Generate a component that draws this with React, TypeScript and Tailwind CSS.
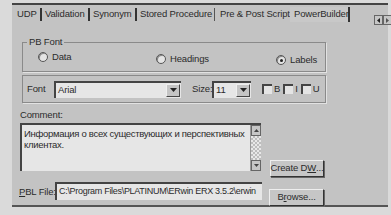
import React from "react";

const Radio = ({ checked }: { checked?: boolean }) => (
  <span className="relative inline-block shrink-0 w-[10px] h-[10px] rounded-full bg-[#e4e4e4] border border-[#555] shadow-[inset_1px_1px_0_#888]">
    {checked && <span className="absolute left-[2.5px] top-[2.5px] w-[3px] h-[3px] rounded-full bg-[#222]" />}
  </span>
);

const Check = () => (
  <span className="inline-block shrink-0 w-[10px] h-[10px] bg-[#e4e4e4] border-l-2 border-t-2 border-[#444]" />
);

const DropBtn = () => (
  <span className="flex shrink-0 items-center justify-center w-[14px] h-[13px] bg-[#c4c4c4] border border-t-[#eee] border-l-[#eee] border-b-[#444] border-r-[#444]">
    <svg width="7" height="4" viewBox="0 0 7 4"><path d="M0 0h7L3.5 4z" fill="#222" /></svg>
  </span>
);

export default function App() {
  return (
    <div className="w-[391px] h-[215px] bg-[#dadada] overflow-hidden text-[9.5px] tracking-[-0.15px] leading-none whitespace-nowrap text-[#2b2b2b] font-['Liberation_Sans',Arial,sans-serif]">
      <div className="pt-[3px] pl-[12px]">
        <div className="w-[376px] h-[204px] bg-[#c3c3c3] border-t-2 border-[#444] border-b-2 border-b-[#555] flex flex-col">
          {/* tabs */}
          <div className="h-[18px] flex items-center pl-[4px]">
            <div className="w-[26px] pl-[1px] border-r-2 border-[#333] h-[13px] flex items-center">UDP</div>
            <div className="w-[48px] pl-[3px] border-r-2 border-[#333] h-[13px] flex items-center">Validation</div>
            <div className="w-[47px] pl-[3px] border-r-2 border-[#333] h-[13px] flex items-center">Synonym</div>
            <div className="w-[78px] pl-[3px] border-r border-[#555] h-[13px] flex items-center">Stored Procedure</div>
            <div className="w-[75px] pl-[5px] h-[13px] flex items-center">Pre &amp; Post Script</div>
            <div className="w-[60px] pl-[4px] border-r-2 border-[#333] h-[15px] flex items-center bg-[#c8c8c8]">PowerBuilder</div>
            <div className="ml-auto mr-[-4px] mt-[12px] flex">
              <span className="w-[9px] h-[10px] bg-[#c6c6c6] border border-[#666] flex items-center justify-center">
                <svg width="3" height="5" viewBox="0 0 3 5"><path d="M3 0v5L0 2.5z" fill="#222" /></svg>
              </span>
              <span className="w-[9px] h-[10px] bg-[#c6c6c6] border border-[#666] flex items-center justify-center">
                <svg width="3" height="5" viewBox="0 0 3 5"><path d="M0 0v5L3 2.5z" fill="#555" /></svg>
              </span>
            </div>
          </div>

          {/* body */}
          <div className="pl-[10px] pt-[14px]">
            <fieldset className="w-[304px] h-[35px] border border-[#8a8a8a] shadow-[1px_1px_0_#e2e2e2] m-0 p-0">
              <legend className="ml-[4px] px-[2px] leading-[10px]">PB Font</legend>
              <div className="flex items-center h-[20px] pl-[15px]">
                <div className="flex items-center gap-[4px] w-[118px]"><Radio /><span>Data</span></div>
                <div className="flex items-center gap-[4px] w-[120px] mt-[3px]"><Radio /><span>Headings</span></div>
                <div className="flex items-center gap-[4px] mt-[6px]"><Radio checked /><span>Labels</span></div>
              </div>
            </fieldset>

            <div className="mt-[3px] w-[304px] h-[28px] border border-[#8a8a8a] shadow-[1px_1px_0_#e2e2e2] flex items-center pl-[4px]">
              <span className="w-[27px]">Font</span>
              <div className="w-[127px] h-[17px] bg-[#e6e6e6] border-l-2 border-t-2 border-[#444] flex items-center justify-between pl-[2px] pr-[1px]">
                <span>Arial</span>
                <DropBtn />
              </div>
              <span className="ml-[11px] w-[20px]">Size:</span>
              <div className="w-[39px] h-[17px] bg-[#e6e6e6] border-l-2 border-t-2 border-[#444] flex items-center justify-between pl-[2px] pr-[1px]">
                <span>11</span>
                <DropBtn />
              </div>
              <div className="ml-[11px] flex items-center gap-[2px]"><Check /><span>B</span></div>
              <div className="ml-[3px] flex items-center gap-[2px]"><Check /><span>I</span></div>
              <div className="ml-[3px] flex items-center gap-[2px]"><Check /><span>U</span></div>
            </div>

            <div className="mt-[7px] ml-[-2px]">Comment:</div>
            <div className="flex items-end mt-[3px] ml-[-2px]">
              <div className="w-[241px] h-[48px] bg-[#e6e6e6] border-l-2 border-t-2 border-[#444] flex">
                <div className="flex-1 min-w-0 pl-[2px] pt-[3px] leading-[11px] whitespace-normal tracking-[-0.3px]">
                  Информация о всех существующих и перспективных клиентах.
                </div>
                <div className="w-[11px] shrink-0 flex flex-col border-l border-[#999]">
                  <span className="h-[11px] bg-[#c6c6c6] border border-[#666] flex items-center justify-center">
                    <svg width="5" height="3" viewBox="0 0 5 3"><path d="M0 3h5L2.5 0z" fill="#444" /></svg>
                  </span>
                  <span className="flex-1 bg-[repeating-conic-gradient(#bdbdbd_0_25%,#e8e8e8_0_50%)] bg-[length:4px_4px]" />
                  <span className="h-[11px] bg-[#c6c6c6] border border-[#666] flex items-center justify-center">
                    <svg width="5" height="3" viewBox="0 0 5 3"><path d="M0 0h5L2.5 3z" fill="#444" /></svg>
                  </span>
                </div>
              </div>
              <div className="ml-[9px] mb-[-6px] w-[54px] h-[17px] bg-[#c6c6c6] border border-t-[#eee] border-l-[#eee] border-b-[#333] border-r-[#333] shadow-[1px_1px_0_#666] flex items-center justify-center">
                Create D<span className="underline">W</span>...
              </div>
            </div>

            <div className="flex items-start mt-[11px] ml-[-3px]">
              <span className="w-[36px] mt-[5px]"><span className="underline">P</span>BL File:</span>
              <div className="w-[207px] h-[18px] bg-[#e6e6e6] border-l-2 border-t-2 border-[#444] flex items-center pl-[2px] overflow-hidden text-[9px] tracking-[-0.3px]">
                C:\Program Files\PLATINUM\ERwin ERX 3.5.2\erwin
              </div>
              <div className="ml-[7px] mt-[7px] w-[55px] h-[17px] bg-[#c6c6c6] border border-t-[#eee] border-l-[#eee] border-b-[#333] border-r-[#333] shadow-[1px_1px_0_#666] flex items-center justify-center">
                B<span className="underline">r</span>owse...
              </div>
            </div>
          </div>
        </div>
      </div>
    </div>
  );
}
